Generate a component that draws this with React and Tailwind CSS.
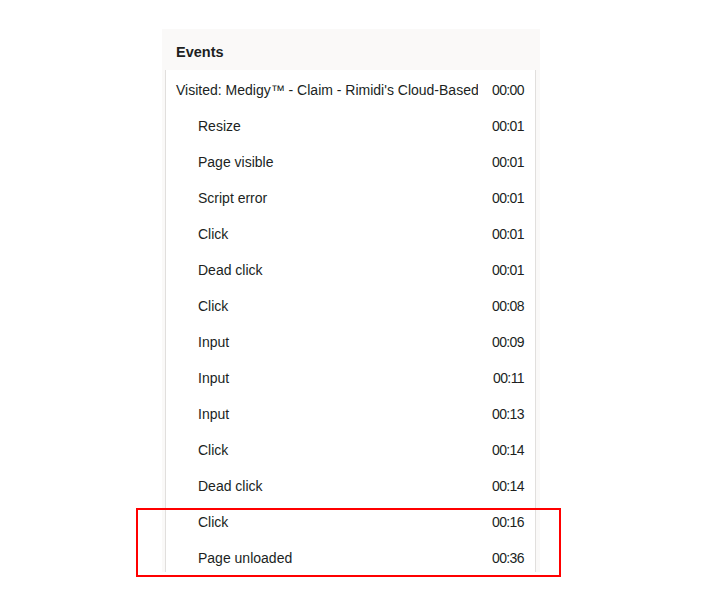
import React from 'react';

const EVENTS = [
  { label: "Visited: Medigy™ - Claim - Rimidi's Cloud-Based Solution for Diabetes Management", time: '00:00', top: true },
  { label: 'Resize', time: '00:01' },
  { label: 'Page visible', time: '00:01' },
  { label: 'Script error', time: '00:01' },
  { label: 'Click', time: '00:01' },
  { label: 'Dead click', time: '00:01' },
  { label: 'Click', time: '00:08' },
  { label: 'Input', time: '00:09' },
  { label: 'Input', time: '00:11' },
  { label: 'Input', time: '00:13' },
  { label: 'Click', time: '00:14' },
  { label: 'Dead click', time: '00:14' },
  { label: 'Click', time: '00:16' },
  { label: 'Page unloaded', time: '00:36' },
];

const EventRow = ({ label, time, top }) => (
  <li className="flex items-center h-9 pr-[11px] gap-[14px]">
    <span className={`flex-1 min-w-0 overflow-hidden whitespace-nowrap ${top ? 'pl-[10px]' : 'pl-8'}`}>
      {label}
    </span>
    <span className="shrink-0 tracking-[-0.6px]">{time}</span>
  </li>
);

export default function App() {
  return (
    <div
      className="relative w-[726px] h-[590px] bg-white text-[14px] text-[#201f1e] overflow-hidden"
      style={{ fontFamily: '"Liberation Sans", Arial, sans-serif' }}
    >
      <div className="pt-[29px] pl-[162px]">
        {/* Events panel */}
        <section className="w-[378px] h-[543px] bg-[#faf9f8] flex flex-col overflow-hidden">
          <header className="h-[41px] shrink-0 flex items-center pt-[6px] px-[14px]">
            <h2 className="font-bold text-[14.5px]">Events</h2>
          </header>
          <div className="flex-1 ml-[3px] mr-[4px] bg-white border-x border-[#e1dfdd] overflow-hidden">
            <ul className="pt-[2px]">
              {EVENTS.map((e, i) => (
                <EventRow key={i} {...e} />
              ))}
            </ul>
          </div>
        </section>
      </div>

      {/* highlight box */}
      <div className="absolute left-[136px] top-[508px] w-[425px] h-[69px] border-2 border-[#ff0000]" />
    </div>
  );
}
